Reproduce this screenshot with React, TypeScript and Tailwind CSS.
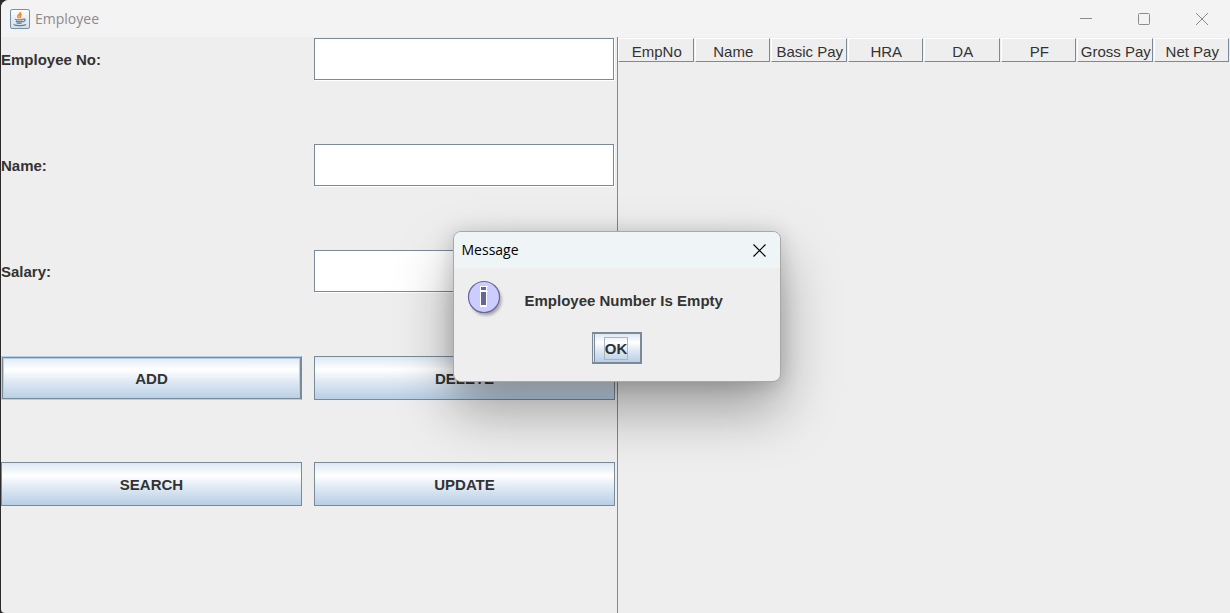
import type { ReactNode } from "react";

const fields = [
  { id: "empno", label: "Employee No:" },
  { id: "name", label: "Name:" },
  { id: "salary", label: "Salary:" },
];

const columns = ["EmpNo", "Name", "Basic Pay", "HRA", "DA", "PF", "Gross Pay", "Net Pay"];

const steel =
  "bg-[linear-gradient(#dde8f3_0%,#ffffff_30%,#dde8f3_60%,#b8cfe5_100%)] font-bold text-[#333333]";

function SteelButton({ children, active = false }: { children: ReactNode; active?: boolean }) {
  return (
    <button
      type="button"
      className={
        active
          ? `${steel} h-11 border border-[#b8cfe5] border-r-[#7a8a99] pt-[2px] shadow-[inset_0_0_0_1px_#7a8a99,inset_0_0_0_2px_#b8cfe5]`
          : `${steel} h-11 border border-[#7a8a99] pt-[2px]`
      }
    >
      {children}
    </button>
  );
}

function JavaIcon() {
  return (
    <svg viewBox="0 0 20 20" className="h-5 w-5" aria-hidden="true">
      <defs>
        <linearGradient id="java-bg" x1="0" y1="0" x2="0" y2="1">
          <stop offset="0" stopColor="#fdfdfd" />
          <stop offset="1" stopColor="#d5dce2" />
        </linearGradient>
      </defs>
      <rect x="0.5" y="0.5" width="19" height="19" rx="1.5" fill="url(#java-bg)" stroke="#7391ab" />
      <path
        d="M10.300 3c.8 2-2.900 2.700-2.500 4.600.2.700 1 1 1.300 1.500M11.800 5.300c-2.400 1-2 1.800-1.300 2.500.4.500 0 .9-.4 1.300"
        fill="none"
        stroke="#ea8a38"
        strokeWidth="1.600"
      />
      <path
        d="M5 10.200c1.500.8 6 .8 8 0M5.800 12.100c1.500.7 5 .7 6.700 0M6.500 13.800c1.500.6 4 .6 5.500 0M13 10.200c2.800-.8 3 1.800-.3 2.600M4 15.300c-.8 1.500 9.500 1.800 12 .2"
        fill="none"
        stroke="#5a819f"
        strokeWidth="1.200"
      />
    </svg>
  );
}

function InfoIcon() {
  return (
    <svg viewBox="0 0 38 38" className="h-[38px] w-[38px]" aria-hidden="true">
      <defs>
        <filter id="info-blur" x="-20%" y="-20%" width="140%" height="140%">
          <feGaussianBlur stdDeviation="1.5" />
        </filter>
      </defs>
      <circle cx="19" cy="20" r="15.500" fill="#000" opacity="0.3" filter="url(#info-blur)" />
      <circle cx="17" cy="17" r="15.500" fill="#ccccff" stroke="#666699" strokeWidth="1.200" />
      <path d="M13 6h8v21h-8z" fill="#fff" />
      <path d="M14 7h5v3h-5zM14 12h5v13h-5z" fill="#666699" />
      <path d="M20 7h1v4h-1zM20 12h1v15h-1z" fill="#ccccff" />
    </svg>
  );
}

export default function App() {
  return (
    <div className="h-screen bg-[#2b2b2b] pl-px font-['Liberation_Sans',Arial,sans-serif] text-[15px] leading-5 text-[#333333]">
      <div className="relative flex h-full flex-col overflow-hidden rounded-tl-lg rounded-bl-[4px] bg-[#eeeeee]">
        <header className="flex h-[37px] shrink-0 items-center bg-[#f3f3f3] pl-[9px] font-['Open_Sans','Noto_Sans',sans-serif] text-[14px] text-[#8b8b8b]">
          <JavaIcon />
          <h1 className="ml-[5px] flex-1">Employee</h1>
          <div className="flex gap-[2px] text-[#8b8b8b]">
            <button type="button" aria-label="Minimize" className="flex h-9 w-14 items-center justify-center">
              <svg viewBox="0 0 12 12" className="h-3 w-3" fill="none" stroke="currentColor">
                <path d="M0 5.500h12" />
              </svg>
            </button>
            <button type="button" aria-label="Maximize" className="flex h-9 w-14 items-center justify-center">
              <svg viewBox="0 0 12 12" className="h-3 w-3" fill="none" stroke="currentColor">
                <rect x="0.5" y="0.5" width="11" height="11" rx="1" />
              </svg>
            </button>
            <button type="button" aria-label="Close" className="flex h-9 w-14 items-center justify-center">
              <svg viewBox="0 0 12 12" className="h-3 w-3" fill="none" stroke="currentColor">
                <path d="M0 0l12 12M12 0L0 12" />
              </svg>
            </button>
          </div>
        </header>

        <main className="grid min-h-0 flex-1 grid-cols-[617fr_612fr]">
          <form className="grid auto-rows-[44px] grid-cols-2 content-start gap-x-3 gap-y-[62px] border-r border-[#7a8a99] pt-px pr-[2px]">
            {fields.map((field) => (
              <div key={field.id} className="col-span-2 grid grid-cols-subgrid">
                <label htmlFor={field.id} className="self-center font-bold">
                  {field.label}
                </label>
                <input
                  id={field.id}
                  type="text"
                  className="mr-px h-[42px] border border-[#7a8a99] bg-white px-1 shadow-[1px_1px_0_#ffffff] outline-none"
                />
              </div>
            ))}
            <SteelButton active>ADD</SteelButton>
            <SteelButton>DELETE</SteelButton>
            <SteelButton>SEARCH</SteelButton>
            <SteelButton>UPDATE</SteelButton>
          </form>

          <section aria-label="Employees">
            <table className="mt-px w-full table-fixed border-separate border-spacing-0">
              <thead>
                <tr>
                  {columns.map((column) => (
                    <th key={column} scope="col" className="p-0 pr-px font-normal">
                      <div className="flex h-6 items-center justify-center border-t border-r border-b border-l border-t-white border-r-[#7a8a99] border-b-[#7a8a99] border-l-white pt-1 pl-[2px] whitespace-nowrap">
                        {column}
                      </div>
                    </th>
                  ))}
                </tr>
              </thead>
            </table>
          </section>
        </main>

        <div className="absolute inset-0 flex items-center justify-center pl-[2px]">
          <div
            role="dialog"
            aria-labelledby="dialog-title"
            className="w-[328px] overflow-hidden rounded-lg border border-[#a8a8a8] bg-[#eeeeee] shadow-[0_28px_56px_rgba(0,0,0,0.34),0_2px_20px_rgba(0,0,0,0.16)]"
          >
            <div className="flex h-9 items-center justify-between bg-[#eff4f6] pr-[14px] pl-2 font-['Open_Sans','Noto_Sans',sans-serif] text-[14px] text-black">
              <h2 id="dialog-title">Message</h2>
              <button type="button" aria-label="Close message">
                <svg viewBox="0 0 13 13" className="h-[13px] w-[13px]" fill="none" stroke="currentColor" strokeWidth="1.200">
                  <path d="M0.500 0.500l12 12M12.500 0.500l-12 12" />
                </svg>
              </button>
            </div>
            <div className="px-[13px] pt-3 pb-[17px]">
              <div className="flex items-center gap-5">
                <InfoIcon />
                <p className="pt-1 font-bold">Employee Number Is Empty</p>
              </div>
              <div className="mt-[14px] flex justify-center">
                <button
                  type="button"
                  className={`${steel} flex h-8 w-[50px] items-center justify-center border-2 border-l border-[#7a8a99] shadow-[inset_1px_0_0_#dde8f3,inset_2px_0_0_#7a8a99]`}
                >
                  <span className="border border-[#a3b8cc] pt-px leading-5">OK</span>
                </button>
              </div>
            </div>
          </div>
        </div>
      </div>
    </div>
  );
}
